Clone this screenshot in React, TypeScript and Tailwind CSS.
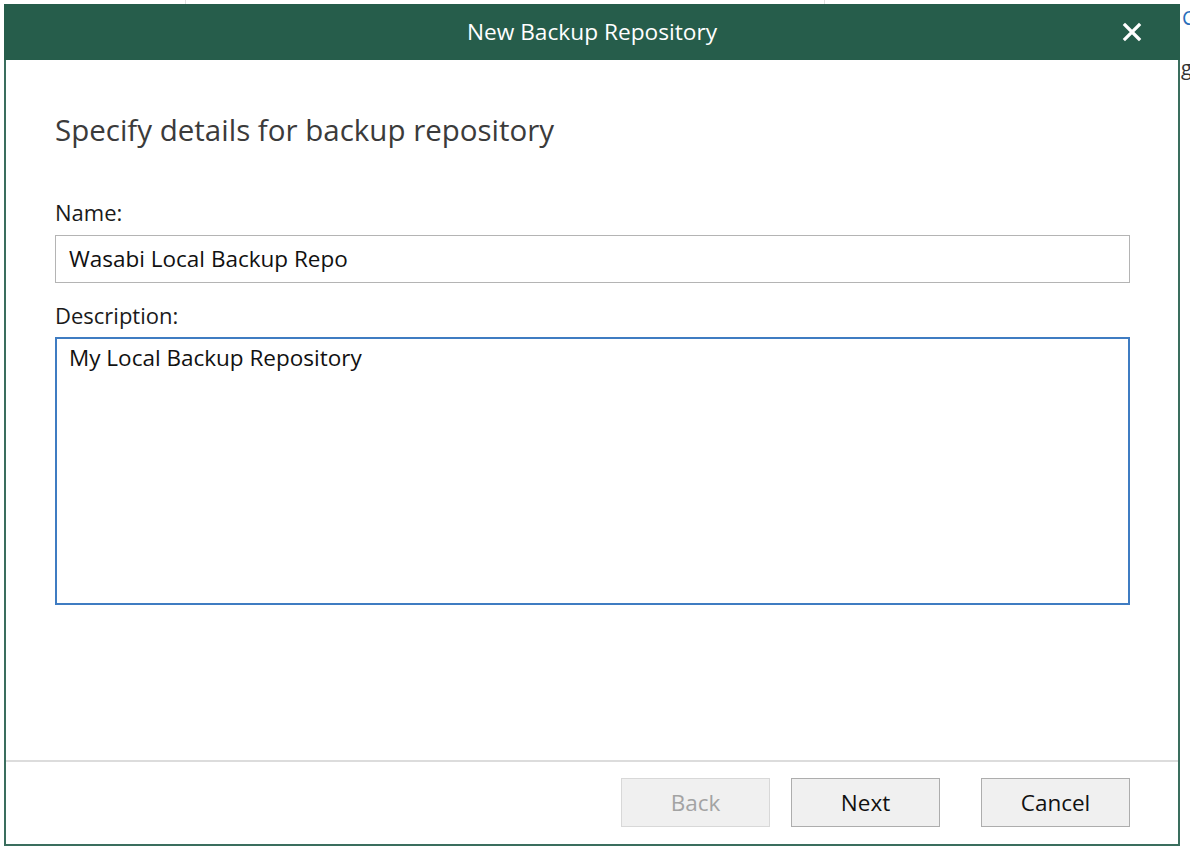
import React from "react";

const font = { fontFamily: '"Open Sans", "Noto Sans", sans-serif' };

export default function App() {
  return (
    <div className="w-[1190px] h-[856px] bg-white relative overflow-hidden" style={font}>
      <div className="absolute left-[185px] top-0 w-px h-[4px] bg-[#e0e0e0]" />
      <div className="absolute left-[824px] top-0 w-px h-[4px] bg-[#e0e0e0]" />
      <div className="absolute left-[1182px] top-[6px] text-[20px] leading-[24px] text-[#2a6ebb]">C</div>
      <div className="absolute left-[1181px] top-[56px] text-[20px] leading-[24px] text-[#333]">g</div>
      <div className="ml-[4px] pt-[4px] w-[1176px]">
        <div className="flex flex-col h-[842px] border-x-2 border-b-2 border-[#3a6e5e]">
          <div className="h-[56px] -mx-[2px] bg-[#265d4b] flex items-center justify-center relative shrink-0">
            <span className="text-white text-[22.7px] leading-none">New Backup Repository</span>
            <svg className="absolute right-[38px] top-[18px]" width="20" height="20" viewBox="0 0 20 20">
              <path d="M3 3 L17 17 M17 3 L3 17" stroke="white" strokeWidth="3.2" strokeLinecap="square" />
            </svg>
          </div>
          <div className="flex-1 flex flex-col pl-[49px] pr-[48px] pt-[50px]">
            <div className="text-[29.5px] leading-[40px] text-[#3b3b3b]">Specify details for backup repository</div>
            <div className="mt-[48px] text-[22px] leading-[28px] text-[#1a1a1a]">Name:</div>
            <div className="mt-[9px] h-[48px] border border-[#b4b4b4] flex items-center pl-[13px] text-[22.5px] text-[#111]">
              Wasabi Local Backup Repo
            </div>
            <div className="mt-[18px] text-[22px] leading-[28px] text-[#1a1a1a]">Description:</div>
            <div className="mt-[8px] h-[268px] border-2 border-[#3f7cc2] pl-[12px] pt-[4px] text-[22.5px] leading-[30px] text-[#111]">
              My Local Backup Repository
            </div>
            <div className="flex-1" />
          </div>
          <div className="h-[2px] bg-[#dcdcdc] shrink-0" />
          <div className="h-[82px] shrink-0 flex items-start justify-end pt-[16px] pr-[48px]">
            <div className="w-[149px] h-[49px] border border-[#d8d8d8] bg-[#f0f0f0] flex items-center justify-center text-[22.5px] text-[#a3a3a3]">Back</div>
            <div className="ml-[21px] w-[149px] h-[49px] border border-[#adadad] bg-[#f0f0f0] flex items-center justify-center text-[22.5px] text-[#111]">Next</div>
            <div className="ml-[41px] w-[149px] h-[49px] border border-[#adadad] bg-[#f0f0f0] flex items-center justify-center text-[22.5px] text-[#111]">Cancel</div>
          </div>
        </div>
      </div>
    </div>
  );
}
